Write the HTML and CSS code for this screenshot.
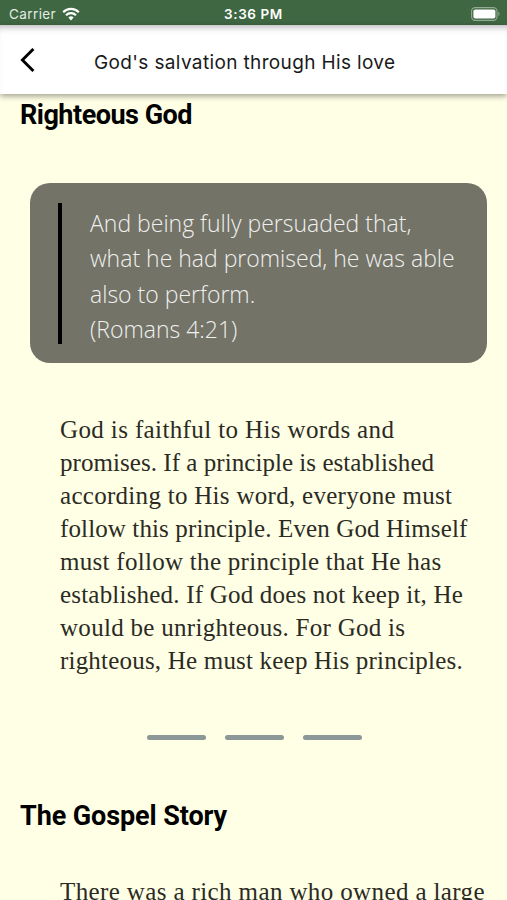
FILE: index.html
```html
<!DOCTYPE html>
<html lang="en">
<head>
    <meta charset="utf-8">
    <title>God's salvation through His love</title>
    <link rel="stylesheet" href="styles.css">
</head>
<body>
    <div class="status-bar">
        <div class="carrier">
            <span>Carrier</span>
            <svg class="wifi" viewBox="0 0 18 14" width="18" height="14">
                <path d="M1.2 5.2a11 11 0 0 1 15.6 0" />
                <path d="M4 8.2a7 7 0 0 1 10 0" />
                <path class="dot" d="M9 13.4l-2.6-2.9a3.8 3.8 0 0 1 5.2 0z" />
            </svg>
        </div>
        <div class="time">3:36 PM</div>
        <div class="battery">
            <svg viewBox="0 0 30 14" width="30" height="14">
                <rect class="shell" x="0.6" y="0.6" width="25.4" height="12.8" rx="3.6" />
                <rect class="charge" x="2.4" y="2.4" width="22" height="9.2" rx="1.8" />
                <path class="cap" d="M27.4 4.6q2.4 2.4 0 4.8z" />
            </svg>
        </div>
    </div>

    <header class="header">
        <svg class="back" viewBox="0 0 16 24" width="16" height="24">
            <path d="M13.4 1L2.4 12l11 11" />
        </svg>
        <div class="title">God's salvation through His love</div>
    </header>

    <main class="content">
        <h2>Righteous God</h2>

        <blockquote class="verse">
            <p>
                And being fully persuaded that,<br>
                what he had promised, he was able<br>
                also to perform.<br>
                (Romans 4:21)
            </p>
        </blockquote>

        <p class="text">
            <span class="wide-4">God is faithful to His words and</span><br>
            <span class="wide-0">promises. If a principle is established</span><br>
            <span class="wide-3">according to His word, everyone must</span><br>
            <span class="wide-1">follow this principle. Even God Himself</span><br>
            <span class="wide-3">must follow the principle that He has</span><br>
            <span class="wide-2">established. If God does not keep it, He</span><br>
            <span class="wide-3">would be unrighteous. For God is</span><br>
            <span class="wide-2">righteous, He must keep His principles.</span>
        </p>

        <div class="divider">
            <span></span>
            <span></span>
            <span></span>
        </div>

        <h2 class="story">The Gospel Story</h2>

        <p class="text last"><span class="wide-4">There was a rich man who owned a large</span></p>
    </main>
</body>
</html>
```

FILE: styles.css
```css
* {
    box-sizing: border-box;
}
body {
    margin: 0;
    height: 900px;
    overflow: hidden;
    background: #ffffe6;
    color: #000;
}
.status-bar {
    display: grid;
    grid-template-columns: 1fr auto 1fr;
    align-items: center;
    height: 25px;
    padding: 2px 6px 0 9px;
    background: #3f6742;
    color: #fff;
    font-family: Inter, sans-serif;
    font-size: 13.5px;
}
.carrier {
    display: flex;
    align-items: center;
    gap: 6px;
    color: #e3ebe3;
    letter-spacing: 0.4px;
}
.wifi {
    fill: none;
    stroke: #fff;
    stroke-width: 2.2;
}
.wifi .dot {
    fill: #fff;
    stroke: none;
}
.time {
    margin-right: 3px;
    font-weight: 600;
    letter-spacing: 0.6px;
}
.battery {
    display: flex;
    justify-content: flex-end;
}
.shell {
    fill: none;
    stroke: #93aa94;
    stroke-width: 1.1;
}
.charge {
    fill: #fff;
}
.cap {
    fill: #93aa94;
}
.header {
    position: relative;
    display: flex;
    align-items: center;
    height: 69px;
    padding-left: 20px;
    background: #fff;
    box-shadow: inset 0 7px 7px -5px rgba(0, 0, 20, 0.3), 0 2px 6px rgba(0, 0, 0, 0.4);
}
.back {
    fill: none;
    stroke: #000;
    stroke-width: 2.9;
}
.title {
    padding: 5px 0 0 58px;
    color: #1a1a1a;
    font-family: Inter, sans-serif;
    font-size: 19px;
    letter-spacing: 0.36px;
    white-space: nowrap;
}
.content {
    padding: 4px 20px 0;
}
h2 {
    margin: 0;
    font-family: Roboto, sans-serif;
    font-size: 27px;
    font-weight: 700;
    letter-spacing: -0.5px;
    line-height: 34px;
    white-space: nowrap;
}
.verse {
    height: 180px;
    margin: 51px 0 0 10px;
    padding: 20px 20px 19px 28px;
    border-radius: 20px;
    background: #737368;
}
.verse p {
    height: 141px;
    margin: 0;
    padding: 3px 0 0 28px;
    border-left: 4px solid #000;
    color: #f0f0ee;
    font-family: "Open Sans", sans-serif;
    font-size: 23px;
    font-weight: 300;
    line-height: 35.3px;
    white-space: nowrap;
}
.text {
    margin: 50px 0 0 40px;
    color: #2b2b24;
    font-family: "Liberation Serif", serif;
    font-size: 25px;
    line-height: 33px;
    white-space: nowrap;
}
/* line by line tracking */
.wide-0 { letter-spacing: 0.05px; }
.wide-1 { letter-spacing: 0.12px; }
.wide-2 { letter-spacing: 0.2px; }
.wide-3 { letter-spacing: 0.29px; }
.wide-4 { letter-spacing: 0.38px; }
.divider {
    display: flex;
    justify-content: center;
    gap: 19px;
    margin-top: 58px;
    padding-left: 1px;
}
.divider span {
    width: 59px;
    height: 5px;
    border-radius: 3px;
    background: #8c9797;
}
.story {
    margin-top: 59px;
    letter-spacing: -0.1px;
}
.text.last {
    margin-top: 42px;
}
```
